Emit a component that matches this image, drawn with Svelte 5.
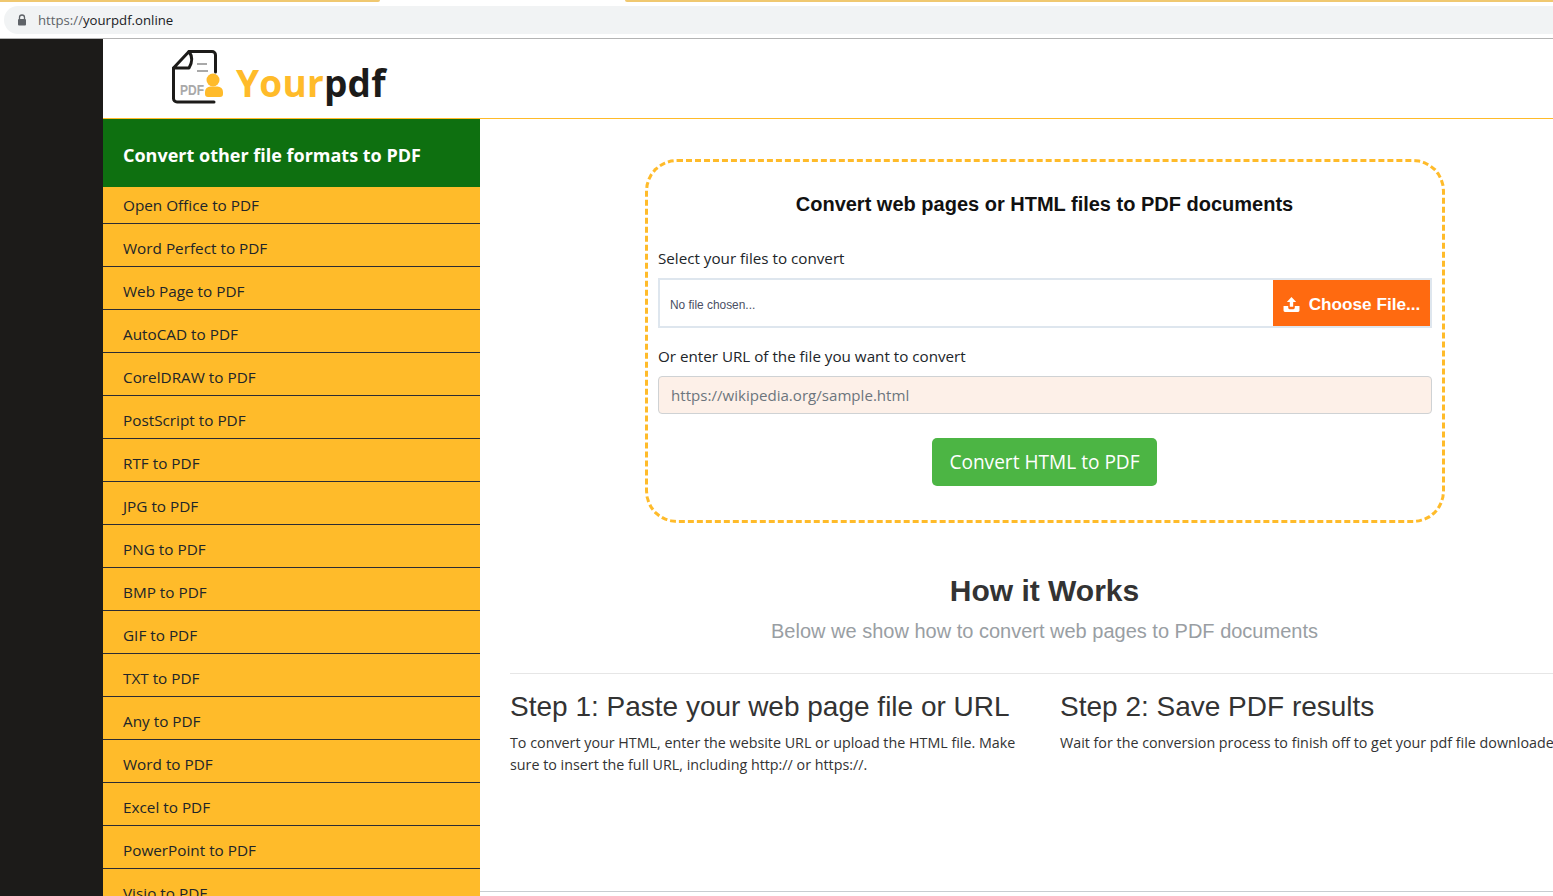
<script>
  const formats = [
    'Open Office', 'Word Perfect', 'Web Page', 'AutoCAD', 'CorelDRAW', 'PostScript',
    'RTF', 'JPG', 'PNG', 'BMP', 'GIF', 'TXT', 'Any', 'Word', 'Excel', 'PowerPoint', 'Visio'
  ];
</script>

<div class="page">
  <div class="chrome">
    <div class="tabs"><span class="tab-a"></span><span class="tab-b"></span></div>
    <div class="address">
      <svg class="lock" viewBox="0 0 10 12" width="10" height="12">
        <path d="M2.5 5V3.5a2.5 2.5 0 0 1 5 0V5" fill="none" stroke="#5f6368" stroke-width="1.3" />
        <rect x="1" y="5" width="8" height="6.5" rx="1" fill="#5f6368" />
      </svg>
      <span class="url"><span class="scheme">https://</span>yourpdf.online</span>
    </div>
  </div>

  <div class="site">
    <div class="rail"></div>
    <div class="content">
      <header>
        <svg class="logo" viewBox="0 0 54 56" width="54" height="56">
          <path d="M18 2.5H41a3.5 3.5 0 0 1 3.5 3.5V23M2.5 19V49.5a3.5 3.5 0 0 0 3.5 3.5H43" fill="none" stroke="#1c1b19" stroke-width="3" stroke-linecap="round" />
          <path d="M2.5 19L18 2.5C22 8 21 14 18 19Z" fill="none" stroke="#1c1b19" stroke-width="3" stroke-linejoin="round" />
          <path d="M26 15H36M26 22H37" stroke="#a9a9a9" stroke-width="2" />
          <text x="9" y="46" class="logo-pdf" textLength="24" lengthAdjust="spacingAndGlyphs">PDF</text>
          <circle cx="42" cy="31" r="6.5" fill="#ffbb2a" />
          <path d="M34 45V43a5.5 5.5 0 0 1 5.5-5.5H46.5A5.5 5.5 0 0 1 52 43V45Q52 48 49 48H37Q34 48 34 45Z" fill="#ffbb2a" />
        </svg>
        <span class="brand"><span class="your">Your</span>pdf</span>
      </header>

      <div class="columns">
        <aside>
          <h2>Convert other file formats to PDF</h2>
          <ul>
            {#each formats as f}
              <li>{f} to PDF</li>
            {/each}
          </ul>
        </aside>

        <main>
          <section class="converter">
            <h3>Convert web pages or HTML files to PDF documents</h3>
            <div class="label first">Select your files to convert</div>
            <div class="file">
              <span class="none">No file chosen...</span>
              <span class="choose">
                <svg viewBox="0 0 18 16" width="17" height="15">
                  <path d="M9 0L14 5.2H10.8V10.5H7.2V5.2H4Z" fill="#fff" />
                  <path d="M0.5 9.5H5.5V11.5Q5.5 13 7 13H11Q12.5 13 12.5 11.5V9.5H17.5V14.5Q17.5 16 16 16H2Q0.5 16 0.5 14.5Z" fill="#fff" />
                </svg>
                Choose File...
              </span>
            </div>
            <div class="label second">Or enter URL of the file you want to convert</div>
            <div class="url-input">https://wikipedia.org/sample.html</div>
            <div class="actions"><button>Convert HTML to PDF</button></div>
          </section>

          <section class="how">
            <h2>How it Works</h2>
            <p>Below we show how to convert web pages to PDF documents</p>
          </section>

          <hr />

          <section class="steps">
            <div class="step">
              <h3>Step 1: Paste your web page file or URL</h3>
              <p>To convert your HTML, enter the website URL or upload the HTML file. Make sure to insert the full URL, including http:// or https://.</p>
            </div>
            <div class="step">
              <h3>Step 2: Save PDF results</h3>
              <p>Wait for the conversion process to finish off to get your pdf file downloaded</p>
            </div>
          </section>

          <div class="bottom-line"></div>
        </main>
      </div>
    </div>
  </div>
</div>

<style>
  :global(body) { margin: 0; background: #fff; }

  .page {
    width: 1553px; height: 896px; overflow: hidden;
    display: flex; flex-direction: column;
    font-family: "Open Sans", "Noto Sans", sans-serif; color: #212529;
  }

  .chrome { height: 38px; flex: none; background: #fff; border-bottom: 1px solid #b4b4b4; }
  .tabs { height: 2px; display: flex; justify-content: space-between; }
  .tab-a { width: 380px; background: #f0c870; border-bottom-right-radius: 3px; }
  .tab-b { width: 928px; background: #f0c870; border-bottom-left-radius: 3px; }
  .address {
    margin: 4px 0 0 4px; height: 28px; background: #f1f3f4;
    border-radius: 14px 0 0 14px;
    display: flex; align-items: center; padding-left: 13px; gap: 11px;
  }
  .lock { flex: none; }
  .url { font-size: 13.2px; color: #202124; }
  .scheme { color: #5f6368; }

  .site { flex: 1; display: flex; min-height: 0; }
  .rail { width: 103px; flex: none; background: #1c1b19; }
  .content { flex: 1; min-width: 0; display: flex; flex-direction: column; }

  header {
    height: 80px; flex: none; box-sizing: border-box; border-bottom: 1px solid #ffbb2a;
    display: flex; align-items: center; padding: 0 0 3px 68px; gap: 11px;
  }
  .logo { flex: none; }
  .logo-pdf { font: bold 14px "Liberation Sans", sans-serif; fill: #a9a9a9; }
  .brand { font: bold 37px "Open Sans", sans-serif; color: #1c1b19; letter-spacing: 0.2px; line-height: 1; padding-top: 10px; }
  .your { color: #ffbb2a; }

  .columns { flex: 1; display: flex; min-height: 0; }

  aside { width: 377px; flex: none; background: #ffbb2a; }
  aside h2 {
    margin: 0; height: 68px; box-sizing: border-box; background: #0e7010; color: #fff;
    font-size: 18px; font-weight: 700; padding: 4px 0 0 20px;
    display: flex; align-items: center;
  }
  aside ul { margin: 0; padding: 0; list-style: none; }
  aside li {
    height: 43px; box-sizing: border-box; border-bottom: 1px solid #2b2b33;
    padding: 14px 0 0 20px; font-size: 15.3px; line-height: 20px; color: #212529;
  }
  aside li:first-child { height: 37px; padding-top: 8px; }

  main { flex: 1; min-width: 0; padding: 40px 0 0 30px; position: relative; }

  .converter {
    width: 800px; height: 364px; box-sizing: border-box; margin-left: 135px;
    border: 3px dashed #ffbb2a; border-radius: 32px;
    padding: 0 10px;
  }
  .converter h3 {
    margin: 30px 0 0; padding-right: 1px; text-align: center; color: #111;
    font: bold 20px/24px "Liberation Sans", sans-serif;
  }
  .label { font-size: 15.2px; line-height: 20px; color: #212529; }
  .label.first { margin-top: 32px; }
  .label.second { margin-top: 18px; }
  .file {
    margin-top: 10px; height: 50px; box-sizing: border-box; border: 2px solid #dee6ee;
    display: flex; align-items: stretch; justify-content: space-between;
  }
  .none {
    align-self: center; padding: 3px 0 0 10px; color: #4a4f63;
    font: 11.9px "Liberation Sans", sans-serif;
  }
  .choose {
    width: 157px; box-sizing: border-box; padding-top: 2px; background: #ff6a10; color: #fff;
    display: flex; align-items: center; justify-content: center; gap: 9px;
    font: bold 17.2px "Liberation Sans", sans-serif;
  }
  .url-input {
    margin-top: 10px; height: 38px; box-sizing: border-box;
    background: #fdf0e8; border: 1px solid #cfd2d4; border-radius: 4px;
    padding: 0 12px; display: flex; align-items: center;
    font-size: 15.1px; color: #6c757d;
  }
  .actions { display: flex; justify-content: center; margin-top: 24px; padding-right: 1px; }
  button {
    width: 225px; height: 48px; border: none; border-radius: 5px;
    background: #4cb544; color: #fff; font: 19.1px "Open Sans", sans-serif;
  }

  .how { margin-left: 135px; width: 799px; text-align: center; }
  .how h2 {
    margin: 50px 0 0; font: bold 30px/36px "Liberation Sans", sans-serif; color: #333;
  }
  .how p {
    margin: 10px 0 0; font: 20px/24px "Liberation Sans", sans-serif; color: #999ea3;
  }

  hr { margin: 30px 0 0; border: none; border-top: 1px solid #e6e6e6; }

  .steps { display: flex; gap: 30px; width: 1100px; margin-top: 15px; }
  .step { width: 520px; flex: none; }
  .step h3 {
    margin: 0; font: 28px/36px "Liberation Sans", sans-serif; color: #333;
  }
  .step p { margin: 7px 0 0; font-size: 14.3px; line-height: 22px; color: #333; }

  .bottom-line { position: absolute; left: 0; right: 0; top: 772px; border-top: 1px solid #c8ccd0; }
</style>
